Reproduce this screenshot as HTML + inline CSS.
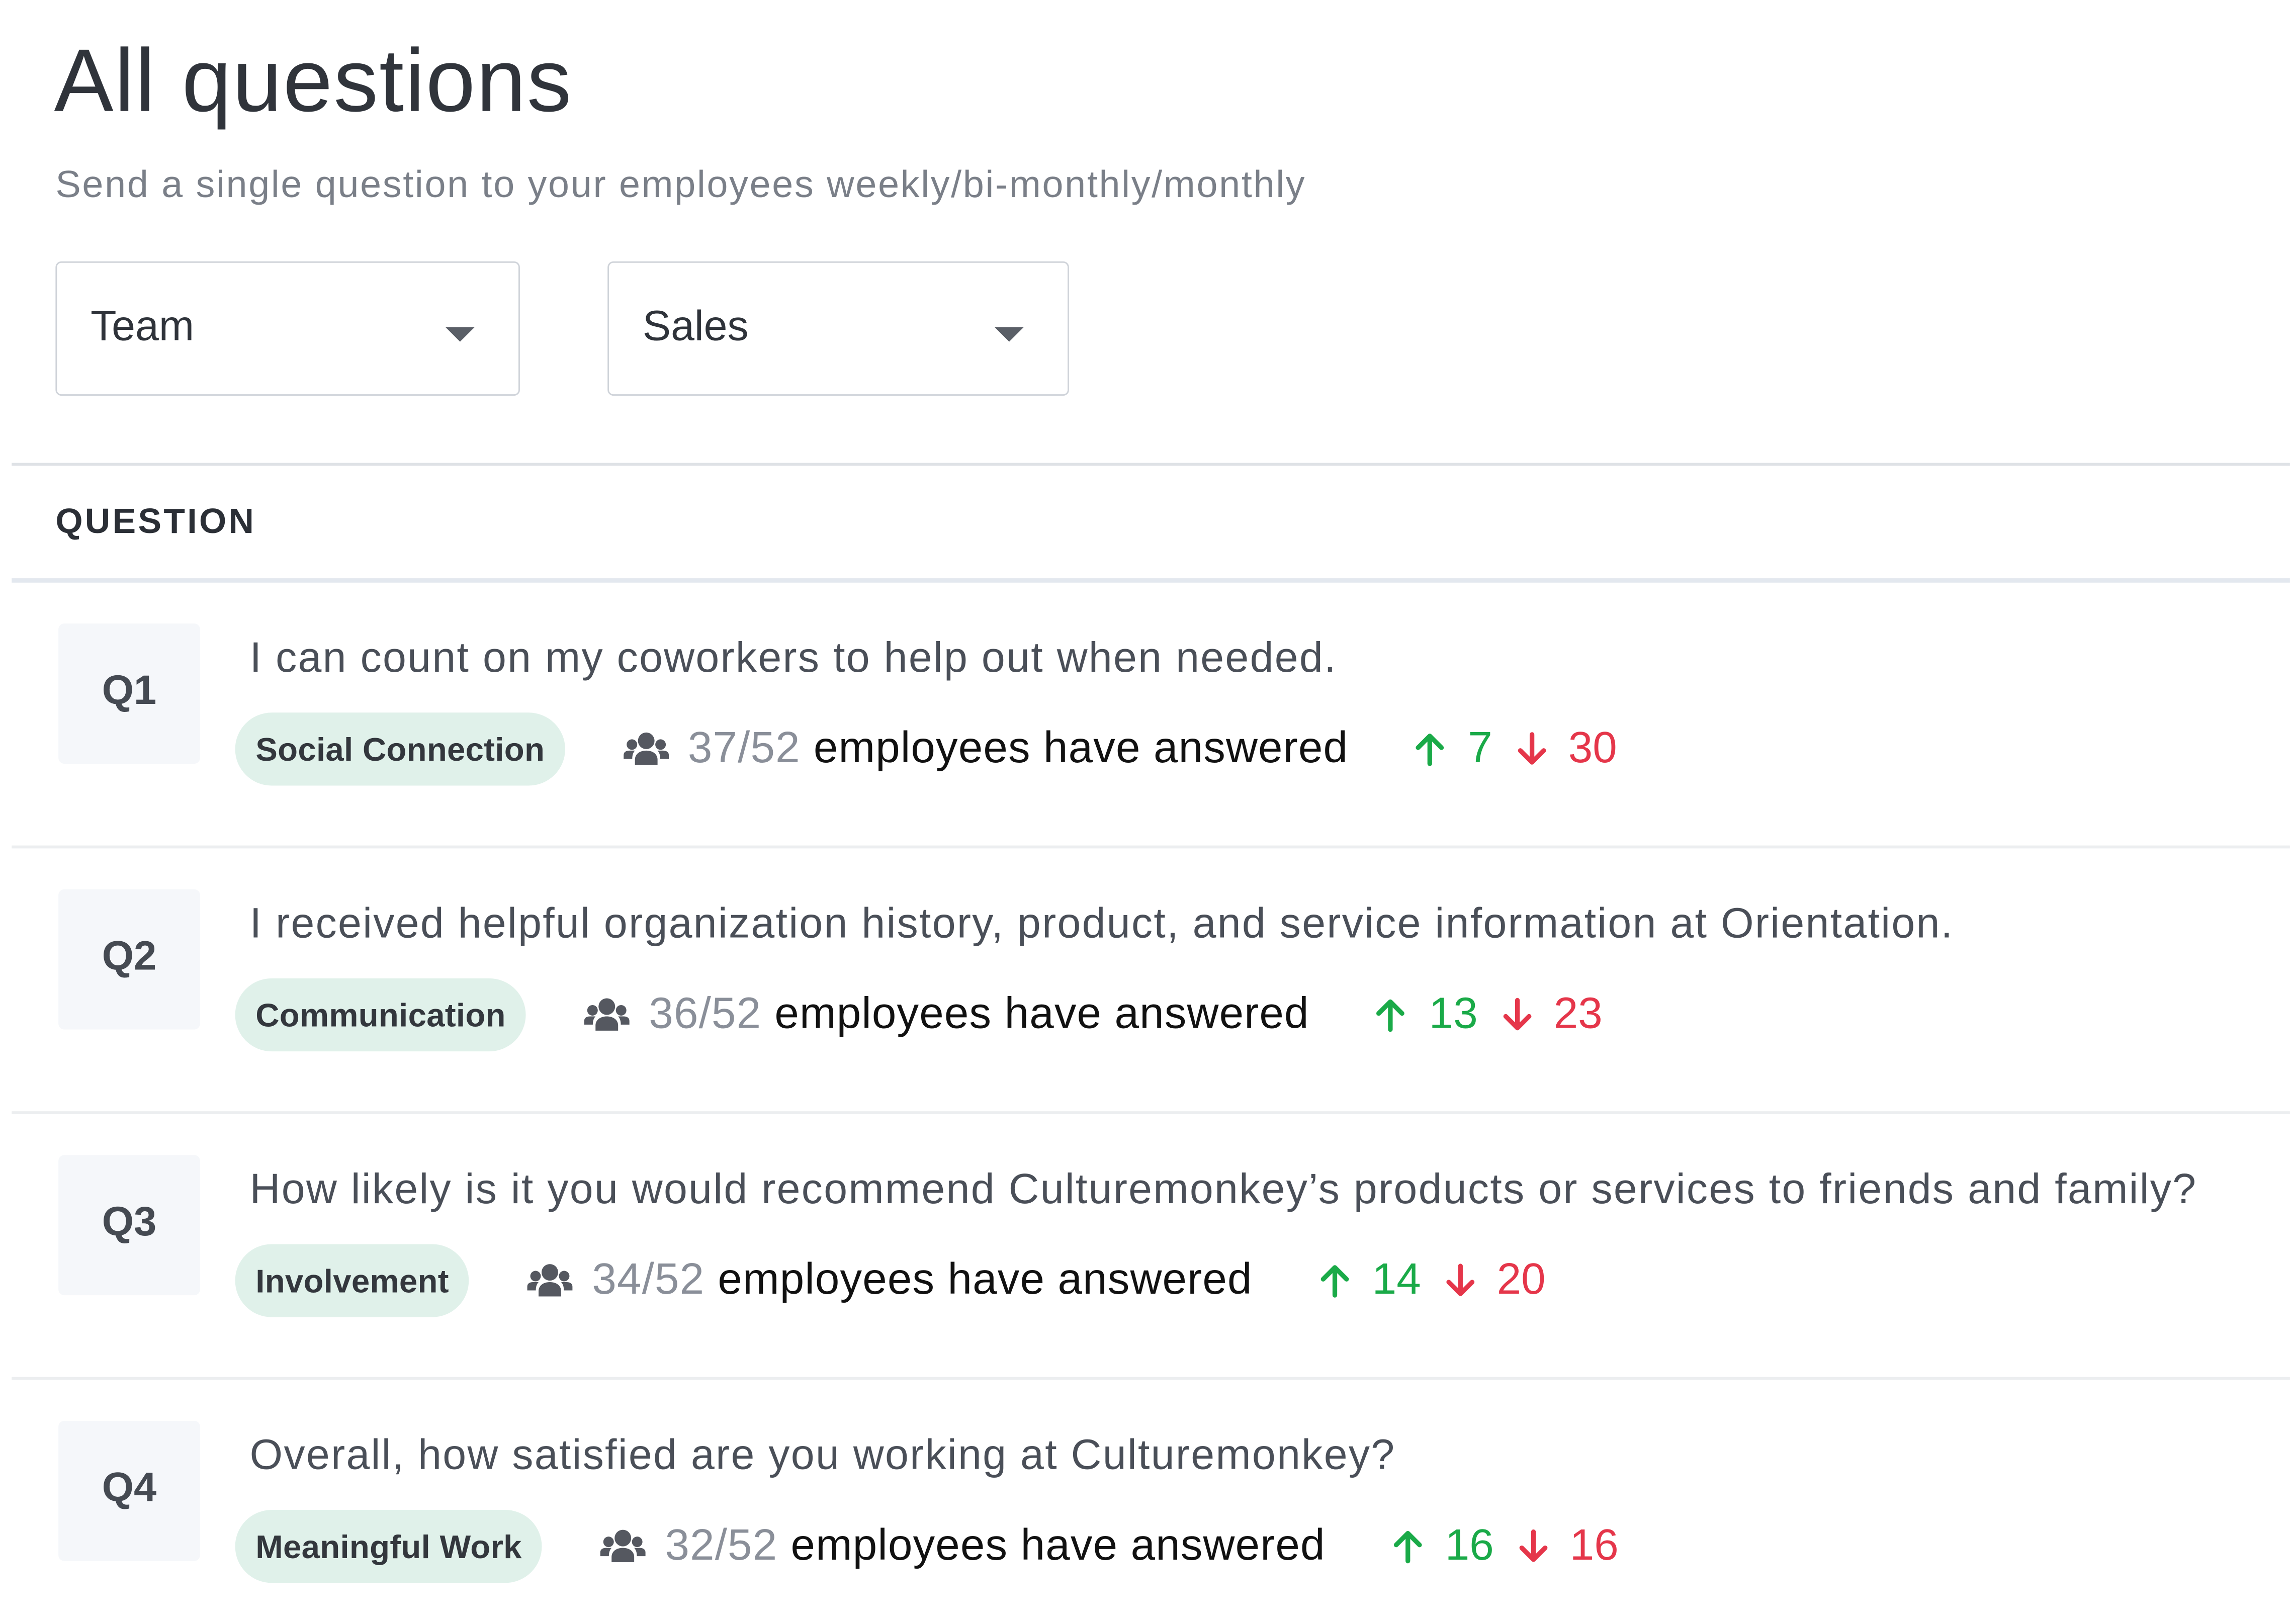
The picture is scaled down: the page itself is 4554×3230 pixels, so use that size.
<!DOCTYPE html>
<html><head><meta charset="utf-8"><style>
html,body{margin:0;padding:0;background:#fff;}
body{width:4554px;height:3228px;overflow:hidden;}
#w{position:absolute;left:0;top:0;width:1568px;height:1112px;transform:scale(2.9043);transform-origin:0 0;font-family:"Liberation Sans",sans-serif;}
.a{position:absolute;}
h1{position:absolute;left:37px;top:20px;margin:0;font-weight:normal;font-size:61px;color:#30343b;letter-spacing:0.7px;}
.sub{left:38px;top:111px;font-size:26px;color:#7a7f88;letter-spacing:0.93px;}
.dd{top:179px;height:92px;border:1.5px solid #cfd3d9;border-radius:4px;box-sizing:border-box;}
.dd span{position:absolute;left:23px;top:28px;font-size:29px;color:#2f333a;}
.dd i{position:absolute;top:44px;width:0;height:0;border-left:10px solid transparent;border-right:10px solid transparent;border-top:10px solid #5a5f67;}
.hl{left:8px;width:1560px;}
.qh{left:38px;top:344px;font-size:24px;font-weight:bold;letter-spacing:1.5px;color:#2b2f36;}
.qb{left:40px;width:97px;height:96px;background:#f5f7fa;border-radius:4px;font-size:28px;font-weight:bold;color:#454a52;text-align:center;line-height:92px;}
.qt{left:171px;font-size:29px;color:#4a4f58;white-space:nowrap;letter-spacing:0.8px;}
.st{left:161px;display:flex;align-items:center;white-space:nowrap;height:50px;}
.tag{background:#e0f1ea;border-radius:25px;height:50px;line-height:52px;padding:0 14px;font-size:22.5px;color:#33373d;font-weight:bold;letter-spacing:0.1px;}
.ic{margin-left:39px;width:33px;height:25px;}
.n{margin-left:12px;font-size:30px;color:#8a8f99;letter-spacing:0.4px;}
.t{margin-left:9px;font-size:30px;color:#111;letter-spacing:0.4px;}
.ar{width:22px;height:24px;}
.g{color:#1aaa48;font-size:30px;}
.r{color:#e5364a;font-size:30px;}
</style></head><body><div id="w">
<h1>All questions</h1>
<div class="a sub">Send a single question to your employees weekly/bi-monthly/monthly</div>
<div class="a dd" style="left:38px;width:318px;"><span>Team</span><i style="left:266px"></i></div>
<div class="a dd" style="left:416px;width:316px;"><span>Sales</span><i style="left:264px"></i></div>
<div class="a hl" style="top:317px;height:1.5px;background:#dfe2e6;"></div>
<div class="a qh">QUESTION</div>
<div class="a hl" style="top:396px;height:3px;background:#e3e8ef;"></div>

<svg width="0" height="0" style="position:absolute"><defs>
<symbol id="ppl" viewBox="0 0 32 24"><g fill="#555860"><circle cx="16" cy="6" r="5.5"/><circle cx="6.5" cy="8.5" r="3.5"/><circle cx="25.5" cy="8.5" r="3.5"/><path d="M8.5 22v-3.5c0-3.5 3-6 7.5-6s7.5 2.5 7.5 6V22z"/><path d="M1 18v-2.5c0-2 1.5-3 4-3h3.5c-1.2 1.3-1.8 3-1.8 5.5z"/><path d="M31 18v-2.5c0-2-1.5-3-4-3h-3.5c1.2 1.3 1.8 3 1.8 5.5z"/></g></symbol>
<symbol id="up" viewBox="0 0 22 24"><path d="M11 22V3M3 11l8-8 8 8" fill="none" stroke="#1aaa48" stroke-width="3.2" stroke-linecap="round" stroke-linejoin="round"/></symbol>
<symbol id="dn" viewBox="0 0 22 24"><path d="M11 2v19M3 13l8 8 8-8" fill="none" stroke="#e5364a" stroke-width="3.2" stroke-linecap="round" stroke-linejoin="round"/></symbol>
</defs></svg>

<div class="a qb" style="top:427px">Q1</div>
<div class="a qt" style="top:435px">I can count on my coworkers to help out when needed.</div>
<div class="a st" style="top:488px"><span class="tag">Social Connection</span><svg class="ic"><use href="#ppl"/></svg><span class="n">37/52</span><span class="t">employees have answered</span><svg class="ar" style="margin-left:45px"><use href="#up"/></svg><span class="g" style="margin-left:15px">7</span><svg class="ar" style="margin-left:16px"><use href="#dn"/></svg><span class="r" style="margin-left:14px">30</span></div>
<div class="a hl" style="top:579px;height:1.5px;background:#eceef0;"></div>

<div class="a qb" style="top:609px">Q2</div>
<div class="a qt" style="top:617px">I received helpful organization history, product, and service information at Orientation.</div>
<div class="a st" style="top:670px"><span class="tag">Communication</span><svg class="ic"><use href="#ppl"/></svg><span class="n">36/52</span><span class="t">employees have answered</span><svg class="ar" style="margin-left:45px"><use href="#up"/></svg><span class="g" style="margin-left:15px">13</span><svg class="ar" style="margin-left:16px"><use href="#dn"/></svg><span class="r" style="margin-left:14px">23</span></div>
<div class="a hl" style="top:761px;height:1.5px;background:#eceef0;"></div>

<div class="a qb" style="top:791px">Q3</div>
<div class="a qt" style="top:799px">How likely is it you would recommend Culturemonkey’s products or services to friends and family?</div>
<div class="a st" style="top:852px"><span class="tag">Involvement</span><svg class="ic"><use href="#ppl"/></svg><span class="n">34/52</span><span class="t">employees have answered</span><svg class="ar" style="margin-left:45px"><use href="#up"/></svg><span class="g" style="margin-left:15px">14</span><svg class="ar" style="margin-left:16px"><use href="#dn"/></svg><span class="r" style="margin-left:14px">20</span></div>
<div class="a hl" style="top:943px;height:1.5px;background:#eceef0;"></div>

<div class="a qb" style="top:973px">Q4</div>
<div class="a qt" style="top:981px">Overall, how satisfied are you working at Culturemonkey?</div>
<div class="a st" style="top:1034px"><span class="tag">Meaningful Work</span><svg class="ic"><use href="#ppl"/></svg><span class="n">32/52</span><span class="t">employees have answered</span><svg class="ar" style="margin-left:45px"><use href="#up"/></svg><span class="g" style="margin-left:15px">16</span><svg class="ar" style="margin-left:16px"><use href="#dn"/></svg><span class="r" style="margin-left:14px">16</span></div>
</div></body></html>
